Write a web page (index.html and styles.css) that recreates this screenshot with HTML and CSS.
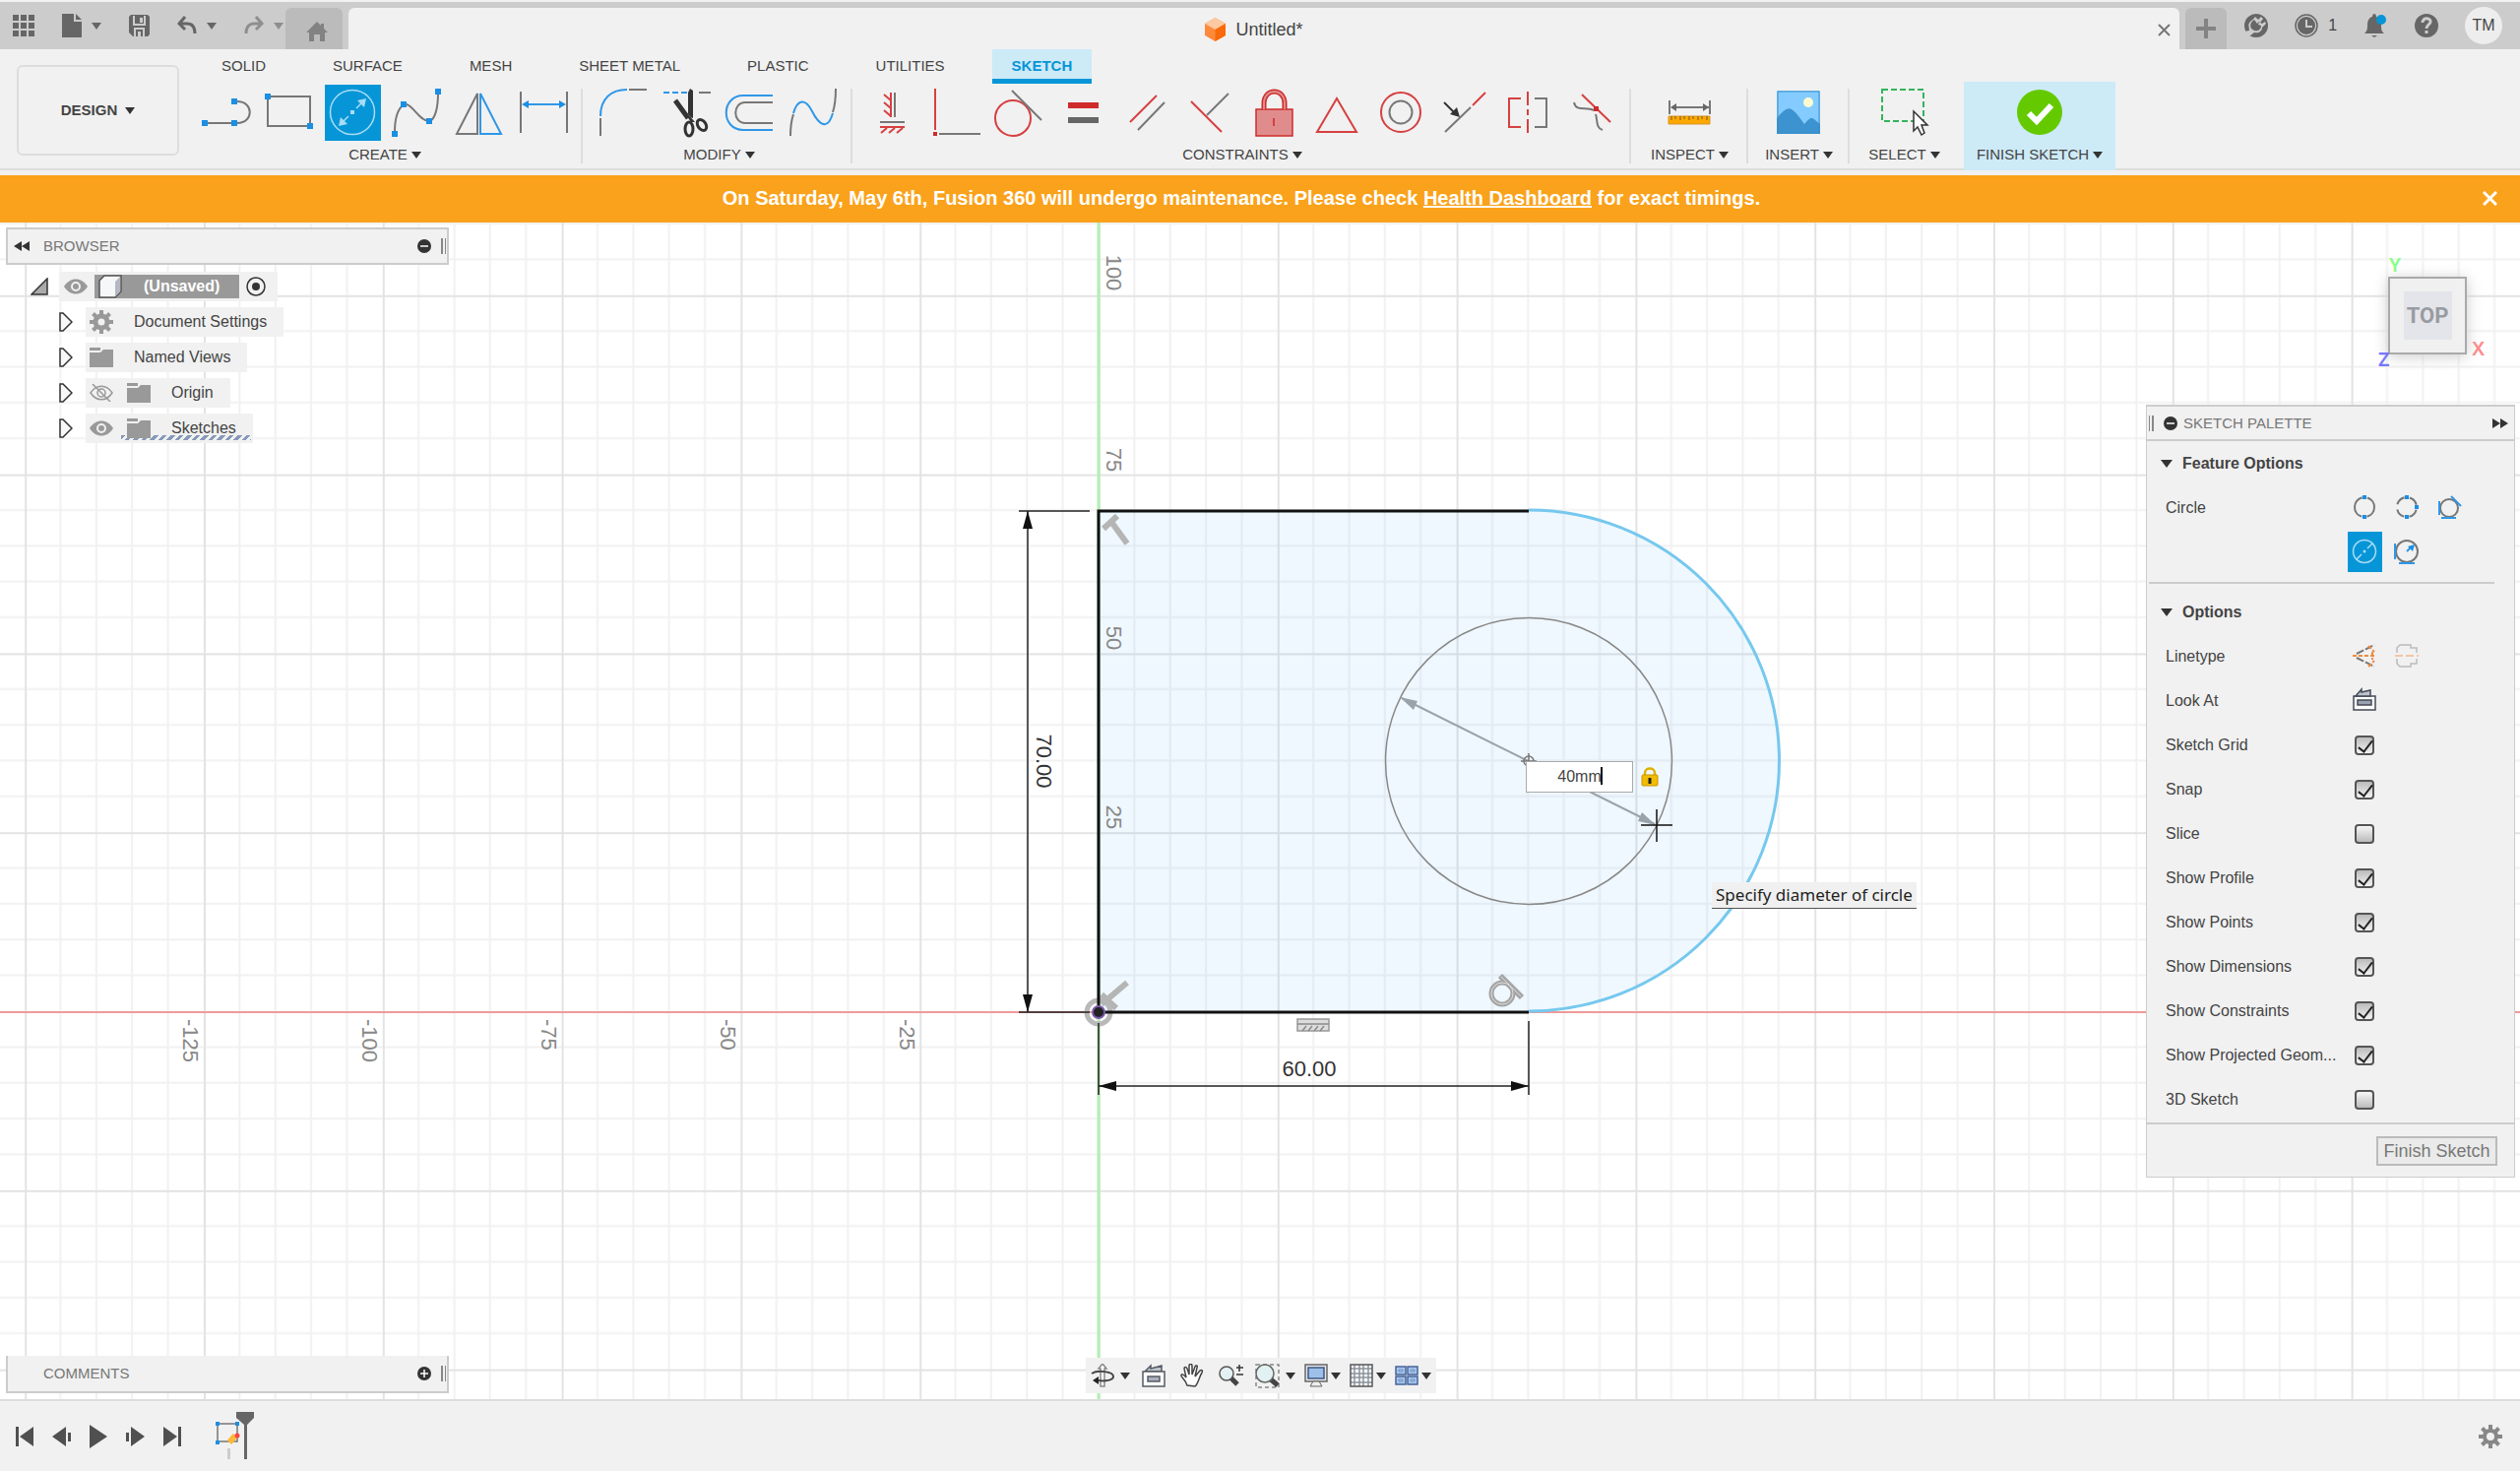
FILE: index.html
```html
<!DOCTYPE html>
<html lang="en">
<head>
<meta charset="utf-8">
<title>Untitled*</title>
<link rel="stylesheet" href="styles.css">
</head>
<body>
<header class="titlebar">
  <div class="quick">
    <button class="qbtn" aria-label="Data panel"><svg width="22" height="22" viewBox="0 0 22 22" fill="#666"><path d="M0 0h6v6H0zM8 0h6v6H8zM16 0h6v6h-6zM0 8h6v6H0zM8 8h6v6H8zM16 8h6v6h-6zM0 16h6v6H0zM8 16h6v6H8zM16 16h6v6h-6z"/></svg></button>
    <button class="qbtn" aria-label="File"><svg width="20" height="24" viewBox="0 0 20 24" fill="#666"><path d="M0 0h12v8h8v16H0zM14 0l6 6h-6z"/></svg><i class="caret"></i></button>
    <button class="qbtn" aria-label="Save"><svg width="21" height="22" viewBox="0 0 21 22"><path d="M2 0h17l2 2v18l-2 2H4l-4-4V2z" fill="#666"/><path d="M5 1v9h11V1M6 22v-8h9v8" fill="none" stroke="#ccc" stroke-width="2"/><path d="M11 3h3v5h-3zM9 17h3v5H9z" fill="#ccc"/></svg></button>
    <button class="qbtn" aria-label="Undo"><svg width="20" height="20" viewBox="0 0 20 20" fill="none" stroke="#666" stroke-width="3"><path d="M8 1L2 8l6 6M2 8h8c5 0 8 3 8 10"/></svg><i class="caret"></i></button>
    <button class="qbtn faded" aria-label="Redo"><svg width="20" height="20" viewBox="0 0 20 20" fill="none" stroke="#666" stroke-width="3"><path d="M12 1l6 7-6 6M18 8h-8c-6 0-8 4-8 10"/></svg><i class="caret"></i></button>
  </div>
  <button class="hometab" aria-label="Home"><svg width="24" height="20" viewBox="0 0 24 20" fill="#828282"><path d="M12 0l4 4V2h3v5l4 4h-3v9h-5v-7H9v7H4v-9H1z"/></svg></button>
  <div class="doctab">
    <svg width="21" height="24" viewBox="0 0 21 24"><path d="M10.500 0L21 6v12l-10.500 6L0 18V6z" fill="#ff8a3c"/><path d="M10.500 0L21 6l-10.500 6L0 6z" fill="#fdc9a0"/><path d="M21 6v12l-10.500 6V12z" fill="#f96a0b"/></svg>
    <span>Untitled*</span>
    <button class="close" aria-label="Close document"><svg width="13" height="13" viewBox="0 0 13 13" stroke="#777" stroke-width="2"><path d="M1 1l11 11M12 1L1 12"/></svg></button>
  </div>
  <button class="plustab" aria-label="New tab"><svg width="20" height="20" viewBox="0 0 20 20" stroke="#838383" stroke-width="4"><path d="M10 0v20M0 10h20"/></svg></button>
  <div class="status">
    <button class="qbtn" aria-label="Extensions"><svg width="24" height="24" viewBox="0 0 24 24"><circle cx="12" cy="12" r="12" fill="#666"/><path d="M0 18l5-1c0-3-2-6 1-9 2-2 4-3 5-5l3 3 3-3 2 2-3 4 2 1 3-2 1 2-4 4c0 4-4 6-8 5l-5 4z" fill="#ccc"/><path d="M4 21l6-4-3-2c-2-4 0-7 3-9l3 4 3-3-2 4 3 1c0 4-3 6-7 5z" fill="#666"/></svg></button>
    <button class="qbtn" aria-label="Jobs"><svg width="24" height="24" viewBox="0 0 24 24" fill="none"><circle cx="12" cy="12" r="11" stroke="#666" stroke-width="1.500"/><circle cx="12" cy="12" r="9" fill="#666"/><path d="M12 6v7h6" stroke="#ccc" stroke-width="2"/></svg><span>1</span></button>
    <button class="qbtn" aria-label="Notifications"><svg width="24" height="24" viewBox="0 0 24 24"><path d="M1 20c3-3 3-5 3-9 0-5 3-8 5-8 0-4 4-4 4 0 3 1 5 4 5 8 0 5 0 6 3 9zM8 22h6l-3 2z" fill="#666"/><circle cx="18" cy="6" r="5" fill="#0696d7"/></svg></button>
    <button class="qbtn" aria-label="Help"><svg width="24" height="24" viewBox="0 0 24 24"><circle cx="12" cy="12" r="12" fill="#666"/><path d="M8 9c0-6 9-5 8-.5C15.500 11 12 11 12 15M12 17v3" fill="none" stroke="#ccc" stroke-width="3"/></svg></button>
    <button class="avatar">TM</button>
  </div>
</header>

<section class="toolbar">
  <button class="design">DESIGN <i class="caret"></i></button>
  <div class="ribbon">
    <nav class="tabs">
      <a href="#">SOLID</a><a href="#">SURFACE</a><a href="#">MESH</a><a href="#">SHEET METAL</a><a href="#">PLASTIC</a><a href="#">UTILITIES</a><a href="#" class="on">SKETCH</a>
    </nav>
    <div class="groups">
      <div class="group create">
        <div class="tools">
          <button aria-label="Line"><svg viewBox="0 0 57 57"><path class="g" d="M8 39h30M41 39c17 0 17-22 0-22"/><path class="bf" d="M5 36h6v6H5zM35 36h6v6h-6zM35 14h6v6h-6z"/></svg></button>
          <button aria-label="Rectangle"><svg viewBox="0 0 57 57"><path class="g" d="M7 12h43v30H7z"/><path class="bf" d="M4 9h6v6H4zM47 39h6v6h-6z"/></svg></button>
          <button class="active" aria-label="Circle"><svg viewBox="0 0 57 57"><g stroke="#a9dcf5" fill="none" stroke-width="1.500"><circle cx="28" cy="28" r="22.500"/><path d="M32 24l6-6M24 32l-6 6"/></g><path d="M42 14l-2 9-7-7zM14 42l9-2-7-7zM26 26h4v4h-4z" fill="#a9dcf5"/></svg></button>
          <button aria-label="Spline"><svg viewBox="0 0 57 57"><path class="g" d="M6 48c0-16 4-24 9-28 9-2 15 17 26 17 6-1 9-14 9-28"/><path class="bf" d="M3 47h6v6H3zM12 17h6v6h-6zM38 34h6v6h-6zM47 4h6v6h-6z"/></svg></button>
          <button aria-label="Mirror"><svg viewBox="0 0 57 57"><path class="g" d="M25 9v41H4z"/><path class="b" d="M28 9v41h21z"/></svg></button>
          <button aria-label="Dimension"><svg viewBox="0 0 57 57"><path class="g" d="M4 7v42M51 7v42"/><path class="b" d="M8 20h40"/><path class="bf" d="M5 20l7-4v8zM50 20l-7-4v8z"/></svg></button>
        </div>
        <button class="glabel">CREATE <i class="caret"></i></button>
      </div>
      <div class="group modify">
        <div class="tools">
          <button aria-label="Fillet"><svg viewBox="0 0 57 57"><path class="g" d="M5 52V34M34 5h18"/><path class="b" d="M5 32C5 14 16 5 32 5"/></svg></button>
          <button aria-label="Trim"><svg viewBox="0 0 57 57"><path class="b" d="M4 8h24" stroke-dasharray="6 3"/><path class="g" d="M40 8h12"/><path d="M15 14l17 24h4zM31 4l3 2v28l-5-2V8z" fill="#333"/><path d="M29 34L16 16" stroke="#333" stroke-width="5"/><g fill="none" stroke="#333" stroke-width="3"><ellipse cx="30" cy="45" rx="4" ry="7"/><ellipse cx="43" cy="41" rx="4" ry="6" transform="rotate(-35 43 41)"/></g></svg></button>
          <button aria-label="Offset"><svg viewBox="0 0 57 57"><path class="b" stroke-width="2.500" d="M51 11H21c-23 0-23 35 0 35h30"/><path class="g" stroke-width="2" d="M51 18H23c-13 0-13 21 0 21h28"/></svg></button>
          <button aria-label="Edit spline"><svg viewBox="0 0 57 57"><path class="g" d="M4 52c0-10 1-16 3-22M47 28c2-6 3-14 3-24"/><path class="b" d="M7 29c4-14 12-16 19-2s16 20 21 2"/></svg></button>
        </div>
        <button class="glabel">MODIFY <i class="caret"></i></button>
      </div>
      <div class="group constraints">
        <div class="tools">
          <button aria-label="Horizontal/Vertical"><svg viewBox="-28 -28 57 57"><path class="g" d="M3-20V5M-12 10h25"/><path class="r" d="M-1-20V5M-1-12l-7-6M-1-4l-7-6M-1 4l-7-6M-12 15h25M-5 16l-6 5M3 16l-6 5M11 16l-6 5"/></svg></button>
          <button aria-label="Coincident"><svg viewBox="-28 -28 57 57"><path class="r" d="M-21-24v42"/><path class="g" d="M-17 22h42"/><path class="rf" d="M-23 20h4v4h-4z"/></svg></button>
          <button aria-label="Tangent"><svg viewBox="-28 -28 57 57"><circle class="r" cx="-6" cy="6" r="18"/><path class="g" d="M-7-22L23 8"/></svg></button>
          <button aria-label="Equal"><svg viewBox="-28 -28 57 57"><path class="rf" d="M-15-10h31v6h-31z"/><path d="M-15 5h31v6h-31z" fill="#666"/></svg></button>
          <button aria-label="Parallel"><svg viewBox="-28 -28 57 57"><path class="r" d="M-17 10l27-27"/><path class="g" d="M-9 18l27-28"/></svg></button>
          <button aria-label="Perpendicular"><svg viewBox="-28 -28 57 57"><path class="r" d="M-19-11l31 31"/><path class="g" d="M-3 3l22-22"/></svg></button>
          <button aria-label="Fix"><svg viewBox="-28 -28 57 57"><path d="M-18-3h37v27h-37z" fill="#e08c8c" stroke="#cf2b2b" stroke-width="1.500"/><path d="M-10-3v-6C-10-25 11-25 11-9v6" fill="none" stroke="#cf2b2b" stroke-width="5"/><path d="M-10-3v-6C-10-25 11-25 11-9v6" fill="none" stroke="#e08c8c" stroke-width="2"/><path class="r" d="M0 6v8"/></svg></button>
          <button aria-label="Polygon"><svg viewBox="-28 -28 57 57"><path class="r" d="M0-14l20 34h-40z"/></svg></button>
          <button aria-label="Concentric"><svg viewBox="-28 -28 57 57"><circle class="r" r="20"/><circle class="g" r="11.500"/></svg></button>
          <button aria-label="Midpoint"><svg viewBox="-28 -28 57 57"><path class="g" d="M-20 20L6-5"/><path class="r" d="M8-7l13-13"/><path d="M-21-10l10 10" stroke="#333" stroke-width="2"/><path d="M-5 5l-10-3 7-7z" fill="#333"/></svg></button>
          <button aria-label="Symmetry"><svg viewBox="-28 -28 57 57"><path class="r" d="M-7-14h-12v29h12M0-21v14M0-3v6M0 7v14"/><path class="g" d="M7-14h12v29H7"/></svg></button>
          <button aria-label="Curvature"><svg viewBox="-28 -28 57 57"><path class="g" d="M-18-10C-16 0-6-6 2-2M4 2c2 6 0 14 7 16"/><path class="r" d="M-10-18l29 28"/><path class="rf" d="M2-6h5v5H2z"/></svg></button>
        </div>
        <button class="glabel">CONSTRAINTS <i class="caret"></i></button>
      </div>
      <div class="group inspect">
        <div class="tools"><button aria-label="Measure"><svg viewBox="-28 -28 57 57"><path class="g" d="M-20-12V2M21-12V2M-18-5h38"/><path d="M-19-5l6-4v8zM20-5l-6-4v8z" fill="#666"/><path d="M-21 4h42v8h-42z" fill="#ffa800" stroke="#d99427"/><path d="M-18 4v4M-14 4v3M-9 4v4M-5 4v3M0 4v4M4 4v3M9 4v4M13 4v3M18 4v4" stroke="#7a5a10"/></svg></button></div>
        <button class="glabel">INSPECT <i class="caret"></i></button>
      </div>
      <div class="group insert">
        <div class="tools"><button aria-label="Insert image"><svg viewBox="-28 -28 57 57"><path d="M-22-22h44v44h-44z" fill="#84ccff"/><path d="M-22 6C-10-8-8-8 6 12c8-10 8-6 16 0v4H-22z" fill="#3c93cf"/><path d="M-22 14h44v8h-44z" fill="#3c93cf"/><circle cx="10" cy="-10" r="5" fill="#fffbd0"/><path d="M-21-21h42v42h-42z" fill="none" stroke="#3c8fc8"/></svg></button></div>
        <button class="glabel">INSERT <i class="caret"></i></button>
      </div>
      <div class="group select">
        <div class="tools"><button aria-label="Select"><svg viewBox="-28 -28 57 57"><path d="M-22-23h42v32h-42z" fill="none" stroke="#34b45c" stroke-width="2" stroke-dasharray="6 3"/><path d="M10-1v20l4-4 4 8 3-2-3-8h6z" fill="#fff" stroke="#333" stroke-width="1.500"/></svg></button></div>
        <button class="glabel">SELECT <i class="caret"></i></button>
      </div>
      <div class="group finish">
        <div class="tools"><button aria-label="Finish"><svg viewBox="-28 -28 57 57"><circle r="23" fill="#65c900"/><path d="M-11 1l8 8L12-7" fill="none" stroke="#fff" stroke-width="6"/></svg></button></div>
        <button class="glabel">FINISH SKETCH <i class="caret"></i></button>
      </div>
    </div>
  </div>
</section>

<section class="banner">
  <p>On Saturday, May 6th, Fusion 360 will undergo maintenance. Please check <a href="#">Health Dashboard</a> for exact timings.</p>
  <button aria-label="Dismiss"><svg width="15" height="15" viewBox="0 0 15 15" stroke="#fff" stroke-width="3"><path d="M1 1l13 13M14 1L1 14"/></svg></button>
</section>

<main class="canvas">
  <svg class="sketch" width="100%" height="100%">
    <defs>
      <pattern id="grid" patternUnits="userSpaceOnUse" x="1116" y="801" width="181.800" height="181.800">
        <path d="M36.360 0v182M72.720 0v182M109.080 0v182M145.440 0v182M0 36.360h182M0 72.720h182M0 109.080h182M0 145.440h182" stroke="#f1f1f1" stroke-width="2"/>
        <path d="M1 0v182M0 1h182" stroke="#e3e3e3" stroke-width="2"/>
      </pattern>
    </defs>
    <rect width="100%" height="100%" fill="url(#grid)"/>
    <path d="M0 802h2560" stroke="#ee9a9a" stroke-width="2"/>
    <path d="M1116 0v1200" stroke="#b4efb4" stroke-width="3"/>
    <g transform="translate(1116 801)">
      <path d="M0 0V-509H437A254.500 254.500 0 0 1 437 0z" fill="#36a6f0" fill-opacity=".08"/>
      <path d="M437-509A254.500 254.500 0 0 1 437 0" fill="none" stroke="#76c8ee" stroke-width="3"/>
      <g class="axis">
        <text transform="translate(8 -750) rotate(90)" text-anchor="middle">100</text>
        <text transform="translate(8 -560) rotate(90)" text-anchor="middle">75</text>
        <text transform="translate(8 -379) rotate(90)" text-anchor="middle">50</text>
        <text transform="translate(8 -197) rotate(90)" text-anchor="middle">25</text>
        <text transform="translate(-930 8) rotate(90)">-125</text>
        <text transform="translate(-748 8) rotate(90)">-100</text>
        <text transform="translate(-566 8) rotate(90)">-75</text>
        <text transform="translate(-384 8) rotate(90)">-50</text>
        <text transform="translate(-202 8) rotate(90)">-25</text>
      </g>
      <g stroke="#8a8a8a" fill="none">
        <circle cx="0" cy="1" r="12" stroke-width="5" stroke="#b9b9b9"/>
        <path d="M3-7l26-22M3-17l15 14" stroke-width="6" stroke="#b5b5b5"/>
        <path d="M5-490l14-13M13-497l16 22" stroke-width="6" stroke="#b5b5b5"/>
        <g stroke="#a5a5a5"><circle cx="410" cy="-18" r="11" stroke-width="5"/><path d="M408-36l22 22" stroke-width="6"/></g>
        <g stroke="#ddd" stroke-width="1"><circle cx="410" cy="-18" r="11"/><path d="M409-35l20 20"/></g>
        <rect x="202" y="8" width="32" height="12" fill="#ddd" stroke="#999" stroke-width="1.500"/><path d="M202 13h32M207 20l4-5M213 20l4-5M219 20l4-5M225 20l4-5" stroke-width="1.500"/>
      </g>
      <path d="M0 1V-508H437M0 1H437" fill="none" stroke="#111" stroke-width="3"/>
      <circle cx="0" cy="1" r="6" fill="#222" stroke="#7858a8" stroke-width="2"/>
      <g stroke="#222" stroke-width="1.500">
        <path d="M-81-508H-9M-81 1H-9M-72-508V1M0 12V85M437 10V85M0 76H437"/>
      </g>
      <path d="M-72-508l5 18h-10zM-72 1l5-18h-10zM0 76l18-5v10zM437 76l-18-5v10z" fill="#111"/>
      <g class="dims">
        <text x="214" y="66" text-anchor="middle">60.00</text>
        <text transform="translate(-63 -254) rotate(90)" text-anchor="middle">70.00</text>
      </g>
      <circle cx="437" cy="-254" r="145.500" fill="none" stroke="#888" stroke-width="1.500"/>
      <g stroke="#9aa3aa" stroke-width="2"><path d="M308-318L565-190"/><path d="M306-319l18 4-4 9zM566-189l-18-4 4-9z" fill="#9aa3aa" stroke="none"/></g>
      <path d="M437-262v16M429-254h16" stroke="#777" stroke-width="1.500"/><circle cx="437" cy="-254" r="5" fill="none" stroke="#777" stroke-width="1.500"/>
      <path d="M567-205v33M551-189h32" stroke="#111" stroke-width="1.500"/>
    </g>
  </svg>

  <div class="dimbox">
    <label class="entry"><input type="text" value="40mm" aria-label="Diameter"><i></i></label>
    <svg width="18" height="20" viewBox="0 0 18 20"><path d="M4 9V6c0-6 10-6 10 0v3" fill="none" stroke="#e0b000" stroke-width="2.500"/><rect x="1" y="8" width="16" height="11" rx="1" fill="#f2bc00" stroke="#c99700"/><path d="M9 11v6" stroke="#222" stroke-width="3"/></svg>
  </div>
  <div class="tip">Specify diameter of circle</div>

  <aside class="browser">
    <div class="phead"><svg width="16" height="10" viewBox="0 0 16 10" fill="#333"><path d="M8 0v10L0 5zM16 0v10L8 5z"/></svg><h2>BROWSER</h2><button class="dot" aria-label="Collapse"><svg width="14" height="14" viewBox="0 0 14 14"><circle cx="7" cy="7" r="7" fill="#333"/><path d="M3 7h8" stroke="#fff" stroke-width="1.500"/></svg></button><i class="grip"></i></div>
    <ul class="tree">
      <li class="root"><svg width="18" height="18" viewBox="0 0 18 18"><path d="M17 1v16H1z" fill="#aaa" stroke="#333" stroke-width="1.500"/></svg>
        <div class="chip"><svg class="eye" width="24" height="16" viewBox="0 0 24 16"><path d="M0 8C6-2 18-2 24 8 18 18 6 18 0 8z" fill="#999"/><circle cx="12" cy="8" r="4" fill="#999" stroke="#f0f0f0" stroke-width="2"/></svg>
          <span class="rootname"><svg width="24" height="24" viewBox="0 0 24 24"><path d="M1 6l5-5h17v16l-6 6H1z" fill="#f6f7f9" stroke="#555" stroke-width="1.500"/><path d="M17 7v15l5-5V2z" fill="#b4b8c2"/></svg><b>(Unsaved)</b></span>
          <svg width="20" height="20" viewBox="0 0 20 20"><circle cx="10" cy="10" r="9" fill="none" stroke="#333" stroke-width="1.500"/><circle cx="10" cy="10" r="4" fill="#333"/></svg></div></li>
      <li><svg class="tw" width="14" height="20" viewBox="0 0 14 20"><path d="M1 1h3l9 9-9 9H1z" fill="#f8f8f8" stroke="#333" stroke-width="1.500"/></svg><div class="chip"><svg width="24" height="24" viewBox="-12 -12 24 24"><circle r="6" fill="none" stroke="#999" stroke-width="5"/><path d="M0-12V-7M0 12V7M-12 0H-7M12 0H7M-8.500-8.500L-5-5M8.500 8.500L5 5M-8.500 8.500L-5 5M8.500-8.500L5-5" stroke="#999" stroke-width="4"/></svg><span>Document Settings</span></div></li>
      <li><svg class="tw" width="14" height="20" viewBox="0 0 14 20"><path d="M1 1h3l9 9-9 9H1z" fill="#f8f8f8" stroke="#333" stroke-width="1.500"/></svg><div class="chip"><svg width="24" height="20" viewBox="0 0 24 20" fill="#999"><path d="M0 0h11v3H0zM0 5h11l3-3h10v18H0z"/></svg><span>Named Views</span></div></li>
      <li><svg class="tw" width="14" height="20" viewBox="0 0 14 20"><path d="M1 1h3l9 9-9 9H1z" fill="#f8f8f8" stroke="#333" stroke-width="1.500"/></svg><div class="chip"><svg class="eye" width="24" height="18" viewBox="0 0 24 18" fill="none" stroke="#999" stroke-width="1.500"><path d="M1 9C7 0 17 0 23 9 17 18 7 18 1 9z"/><circle cx="12" cy="9" r="4"/><path d="M3 0l18 18"/></svg><svg width="24" height="20" viewBox="0 0 24 20" fill="#999"><path d="M0 0h11v3H0zM0 5h11l3-3h10v18H0z"/></svg><span>Origin</span></div></li>
      <li><svg class="tw" width="14" height="20" viewBox="0 0 14 20"><path d="M1 1h3l9 9-9 9H1z" fill="#f8f8f8" stroke="#333" stroke-width="1.500"/></svg><div class="chip hatch"><svg class="eye" width="24" height="16" viewBox="0 0 24 16"><path d="M0 8C6-2 18-2 24 8 18 18 6 18 0 8z" fill="#999"/><circle cx="12" cy="8" r="4" fill="#999" stroke="#f0f0f0" stroke-width="2"/></svg><svg width="24" height="20" viewBox="0 0 24 20" fill="#999"><path d="M0 0h11v3H0zM0 5h11l3-3h10v18H0z"/></svg><span>Sketches</span></div></li>
    </ul>
  </aside>

  <aside class="comments"><div class="phead"><svg width="16" height="10"></svg><h2>COMMENTS</h2><button class="dot" aria-label="Expand"><svg width="14" height="14" viewBox="0 0 14 14"><circle cx="7" cy="7" r="7" fill="#333"/><path d="M3 7h8M7 3v8" stroke="#fff" stroke-width="1.500"/></svg></button><i class="grip"></i></div></aside>

  <div class="cube"><b class="y">Y</b><b class="x">X</b><b class="z">Z</b><button>TOP</button></div>

  <aside class="palette">
    <div class="phead"><i class="grip"></i><button class="dot" aria-label="Collapse palette"><svg width="14" height="14" viewBox="0 0 14 14"><circle cx="7" cy="7" r="7" fill="#333"/><path d="M3 7h8" stroke="#fff" stroke-width="1.500"/></svg></button><h2>SKETCH PALETTE</h2><svg width="16" height="10" viewBox="0 0 16 10" fill="#333"><path d="M0 0l8 5-8 5zM8 0l8 5-8 5z"/></svg></div>
    <section>
      <h3><i class="caret"></i>Feature Options</h3>
      <div class="row"><span>Circle</span><div class="opts">
        <button aria-label="Center"><svg viewBox="-17 -20 35 41"><circle class="g" r="10" stroke-dasharray="26 5.400" stroke-dashoffset="-18.400"/><path class="bf" d="M-2-12h4v4h-4zM-2 8h4v4h-4z"/></svg></button>
        <button aria-label="Three point"><svg viewBox="-17 -20 35 41"><circle class="g" r="10" stroke-dasharray="10.300 5.400" stroke-dashoffset="-2.700"/><path class="bf" d="M-2-12h4v4h-4zM-2 8h4v4h-4zM8-2h4v4H8z"/></svg></button>
        <button aria-label="Three tangent"><svg viewBox="-17 -20 35 41"><circle class="g" cx="0" cy="1" r="9"/><path class="b" d="M-10-6v14M-8 11H7M2-11l10 10"/></svg></button></div></div>
      <div class="row"><span></span><div class="opts">
        <button class="active" aria-label="Center diameter"><svg viewBox="-17 -20 35 41"><g fill="none" stroke="#a9dcf5" stroke-width="1.500"><circle r="11.500"/><path d="M3-3l5-5M-3 3l-5 5"/></g><circle r="1.500" fill="#a9dcf5"/></svg></button>
        <button aria-label="Two tangent"><svg viewBox="-17 -20 35 41"><circle class="g" r="11"/><path class="b" d="M-12-8V8M-8 12H8M0 0l5-5"/><path class="bf" d="M8-7L6 0 1-5z"/></svg></button></div></div>
    </section>
    <hr>
    <section>
      <h3><i class="caret"></i>Options</h3>
      <div class="row"><span>Linetype</span><div class="opts">
        <button aria-label="Construction"><svg viewBox="-17 -20 35 41" fill="none"><path class="g" stroke-dasharray="8 2" d="M-8-2L10-11M-8 2L10 11"/><path d="M-12 0h24M4-10l6 6M8-4V4M4 11l6-6" stroke="#f08a3c" stroke-width="2" stroke-dasharray="4 2"/></svg></button>
        <button aria-label="Centerline"><svg viewBox="-17 -20 35 41" fill="none"><path d="M-10-3v-5l3-3H4v3h6v5M-10 3v5l3 3H4V8h6V3" stroke="#bbb" stroke-width="1.500"/><path d="M-12 0h24" stroke="#f4b78f" stroke-width="1.500" stroke-dasharray="8 3"/></svg></button></div></div>
      <div class="row"><span>Look At</span><div class="opts"><button aria-label="Look at"><svg viewBox="-17 -20 35 41"><g fill="#fff" stroke="#444b55" stroke-width="1.500"><path d="M-11-4h22v14h-22z"/><path d="M-9-4l6-7v3l9-2v6z" fill="#bcc3cc"/><path d="M-7 0H7v5H-7z" fill="#9aa3b2"/></g></svg></button></div></div>
      <label class="row"><span>Sketch Grid</span><input type="checkbox" checked></label>
      <label class="row"><span>Snap</span><input type="checkbox" checked></label>
      <label class="row"><span>Slice</span><input type="checkbox"></label>
      <label class="row"><span>Show Profile</span><input type="checkbox" checked></label>
      <label class="row"><span>Show Points</span><input type="checkbox" checked></label>
      <label class="row"><span>Show Dimensions</span><input type="checkbox" checked></label>
      <label class="row"><span>Show Constraints</span><input type="checkbox" checked></label>
      <label class="row"><span>Show Projected Geom...</span><input type="checkbox" checked></label>
      <label class="row"><span>3D Sketch</span><input type="checkbox"></label>
    </section>
    <footer><button>Finish Sketch</button></footer>
  </aside>

  <div class="navbar">
    <button class="wide" aria-label="Orbit"><svg width="24" height="24" viewBox="0 0 24 24" fill="none" stroke="#444" stroke-width="1.500"><path d="M10 23V5H8l4-5 4 5h-2v18z" fill="#fff" stroke="#888"/><path d="M1 10c6-4 22-2 22 3 0 4-8 5-16 4" stroke-width="2"/><path d="M8 13v8l-6-4z" fill="#222" stroke="none"/></svg><i class="caret"></i></button>
    <button class="plain" aria-label="Look at"><svg width="24" height="24" viewBox="0 0 24 24" fill="#fff" stroke="#555b63" stroke-width="1.500"><path d="M3 8l6-6v3l11-3v6z" fill="#bcc3cc"/><path d="M1 8h22v15H1z"/><path d="M6 13h12v5H6z" fill="#aab0bd"/></svg></button>
    <button class="plain" aria-label="Pan"><svg width="24" height="24" viewBox="0 0 24 24"><path d="M7 22C5 16 1 14 1 12s3-1 5 2L4 5c0-2 2-2 3 0l2 6V2c0-2 3-2 3 0v9l3-8c1-2 3-1 2 1l-2 9 5-6c2-1 3 0 2 2-3 5-4 12-7 14z" fill="#fff" stroke="#444" stroke-width="1.500"/></svg></button>
    <button class="plain" aria-label="Zoom"><svg width="26" height="24" viewBox="0 0 26 24"><path d="M12 14l7 7" stroke="#444" stroke-width="5"/><circle cx="8" cy="10" r="7" fill="#e4f1f4" stroke="#555" stroke-width="1.500"/><path d="M21 1v7M18 4h7M18 11h7" stroke="#333" stroke-width="1.500"/></svg></button>
    <button class="wide" aria-label="Fit"><svg width="25" height="25" viewBox="0 0 25 25"><path d="M1 1h23v23H1z" fill="none" stroke="#888" stroke-width="1.500" stroke-dasharray="4 3"/><path d="M16 16l7 6" stroke="#444" stroke-width="5"/><circle cx="10" cy="10" r="9" fill="#e2f2f2" stroke="#666" stroke-width="1.500"/></svg><i class="caret"></i></button>
    <button aria-label="Display"><svg width="24" height="24" viewBox="0 0 24 24"><path d="M1 1h22v17H1z" fill="#e8e8e8" stroke="#666" stroke-width="1.500"/><path d="M4 4h16v11H4z" fill="#9dc0e8" stroke="#3d5585" stroke-width="1.500"/><path d="M9 18h6l3 5H6z" fill="#eee" stroke="#666"/></svg><i class="caret"></i></button>
    <button aria-label="Grid"><svg width="24" height="24" viewBox="0 0 24 24" fill="none"><path d="M1 1h22v22H1z" fill="#fff"/><path d="M1 5h22M1 10h22M1 14h22M1 19h22M5 1v22M10 1v22M14 1v22M19 1v22" stroke="#8a929c" stroke-width="1.500"/><path d="M1 1h22v22H1z" stroke="#555" stroke-width="1.500"/></svg><i class="caret"></i></button>
    <button aria-label="Viewports"><svg width="24" height="20" viewBox="0 0 24 20" fill="#a8c6ea" stroke="#46639a" stroke-width="1.500"><path d="M1 1h10v8H1zM13 1h10v8H13zM1 11h10v8H1zM13 11h10v8H13z"/><path d="M4 4h4v2H4zM16 4h4v2h-4zM4 14h4v2H4zM16 14h4v2h-4z" stroke="#6f93c8" stroke-width="1"/></svg><i class="caret"></i></button>
  </div>
</main>

<footer class="timeline">
  <button aria-label="Start"><svg width="18" height="22" viewBox="0 0 18 22"><path d="M0 1h3v20H0zM18 1v20L4 11z"/></svg></button>
  <button aria-label="Step back"><svg width="19" height="20" viewBox="0 0 19 20"><path d="M14 0v20L0 10zM16 6h3v9h-3z"/></svg></button>
  <button aria-label="Play"><svg width="18" height="24" viewBox="0 0 18 24"><path d="M0 0l18 12L0 24z"/></svg></button>
  <button aria-label="Step forward"><svg width="19" height="20" viewBox="0 0 19 20"><path d="M5 0v20l14-10zM0 6h3v9H0z"/></svg></button>
  <button aria-label="End"><svg width="18" height="22" viewBox="0 0 18 22"><path d="M0 1v20l14-10zM15 1h3v20h-3z"/></svg></button>
  <button class="feature" aria-label="Sketch1"><svg width="42" height="50" viewBox="0 0 42 50"><path d="M3 12h20v18H3z" fill="none" stroke="#777" stroke-width="1.500"/><path d="M1 10h4v4H1zM21 10h4v4h-4zM1 29h4v4H1z" fill="#1a8fe3"/><path d="M15 31l6-7" stroke="#ffb938" stroke-width="6"/><circle cx="23" cy="24" r="2.500" fill="#f44"/><path d="M13 37h3v11h-3z" fill="#ccc"/><path d="M22 0h18v6l-7 7v35h-3V13l-8-7z" fill="#666"/></svg></button>
  <button class="gear" aria-label="Settings"><svg width="24" height="24" viewBox="-12 -12 24 24"><circle r="6" fill="none" stroke="#888" stroke-width="4"/><path d="M0-12V-7M0 12V7M-12 0H-7M12 0H7M-8.500-8.500L-5-5M8.500 8.500L5 5M-8.500 8.500L-5 5M8.500-8.500L5-5" stroke="#888" stroke-width="4"/></svg></button>
</footer>
</body>
</html>
```
FILE: styles.css
```css
* { box-sizing: border-box; }
body {
  margin: 0;
  min-height: 100vh;
  display: flex;
  flex-direction: column;
  background: #f1f1f1;
  color: #444;
  font: 16px/20px "Liberation Sans", Arial, sans-serif;
}
button {
  border: 0;
  padding: 0;
  margin: 0;
  background: none;
  color: inherit;
  font: inherit;
  display: flex;
  align-items: center;
  justify-content: center;
}
svg { display: block; flex: none; }
h2, h3, p, ul { margin: 0; padding: 0; }
.caret {
  width: 0;
  height: 0;
  border: 5px solid transparent;
  border-top: 7px solid #333;
  border-bottom: 0;
}
.g { fill: none; stroke: #777; stroke-width: 2; }
.b { fill: none; stroke: #2f97e8; stroke-width: 2; }
.r { fill: none; stroke: #d64040; stroke-width: 2; }
.bf { fill: #1a8fe3; }
.rf { fill: #cf2b2b; }
.active { background: #0696d7; }

/* Title bar */
.titlebar {
  height: 50px;
  border-top: 2px solid #f1f1f1;
  background: #ccc;
  display: flex;
  align-items: flex-end;
}
.quick {
  width: 290px;
  height: 48px;
  padding-left: 13px;
  display: flex;
  align-items: center;
  gap: 28px;
}
.qbtn { gap: 10px; }
.qbtn .caret { border-top-color: #666; }
.faded { opacity: .6; }
.hometab, .plustab {
  height: 42px;
  background: #bbb;
  border-radius: 6px 6px 0 0;
}
.hometab { width: 58px; padding: 6px 0 0 6px; }
.plustab { width: 42px; margin-left: 6px; }
.doctab {
  flex: 1;
  height: 42px;
  margin-left: 6px;
  padding: 2px 9px 0 12px;
  background: #f1f1f1;
  border-radius: 6px 6px 0 0;
  display: flex;
  align-items: center;
  gap: 10px;
  font-size: 18px;
}
.doctab > svg { margin-left: auto; }
.doctab .close { margin-left: auto; }
.status {
  width: 298px;
  height: 48px;
  padding: 0 18px 0 18px;
  display: flex;
  align-items: center;
  justify-content: space-between;
}
.avatar {
  width: 38px;
  height: 38px;
  border-radius: 50%;
  background: #ededed;
}

/* Ribbon */
.toolbar {
  display: flex;
  height: 128px;
  border-bottom: 5px solid #f1f1f1;
  box-shadow: inset 0 -2px #ddd;
  font-size: 15px;
}
.design {
  width: 165px;
  height: 92px;
  margin: 16px 8px 0 17px;
  gap: 8px;
  border: 2px solid #ddd;
  border-radius: 6px;
  font-weight: bold;
}
.ribbon { flex: 1; }
.tabs { display: flex; height: 33px; gap: 28px; padding-left: 15px; }
.tabs a {
  height: 35px;
  padding: 7px 20px 0;
  color: #444;
  text-decoration: none;
}
.tabs .on {
  background: #cdeaf7;
  border-bottom: 5px solid #0696d7;
  color: #0696d7;
  font-weight: bold;
}
.groups { display: flex; height: 90px; }
.group {
  display: flex;
  flex-direction: column;
  padding: 3px 0 0;
  background: linear-gradient(#ddd, #ddd) right 7px / 2px 76px no-repeat;
}
.tools { display: flex; justify-content: space-between; }
.tools button, .tools svg { width: 57px; height: 57px; }
.glabel { gap: 4px; height: 28px; }
.create { width: 402px; padding-left: 10px; padding-right: 10px; }
.modify { width: 274px; padding-left: 13px; padding-right: 10px; }
.constraints { width: 791px; padding-left: 12px; padding-right: 11px; }
.inspect, .insert, .select, .finish { align-items: center; }
.inspect { width: 119px; }
.insert { width: 103px; }
.select { width: 111px; margin-right: 5px; background: none; }
.finish { width: 154px; background: #cdeaf7; }

/* Notice */
.banner {
  height: 48px;
  padding: 0 23px 2px 0;
  display: flex;
  align-items: center;
  background: #faa21b;
  color: #fff;
  font-size: 20px;
  font-weight: bold;
}
.banner p { flex: 1; text-align: center; }
.banner a { color: #fff; }

/* Drawing area */
.canvas { position: relative; flex: 1; background: #fff; overflow: hidden; }
.sketch { position: absolute; inset: 0; }
.axis, .dims { font-size: 22px; fill: #888; }
.dims { fill: #333; }
.dimbox { position: absolute; left: 1550px; top: 547px; display: flex; align-items: center; gap: 8px; }
.entry { position: relative; }
.entry input {
  display: block;
  width: 109px;
  height: 32px;
  border: 1px solid #aaa;
  padding: 0;
  text-align: center;
  color: #444;
  font: 16px/20px "Liberation Sans", Arial, sans-serif;
}
.entry i { position: absolute; left: 76px; top: 6px; width: 2px; height: 18px; background: #111; }
.tip {
  position: absolute;
  left: 1739px;
  top: 670px;
  padding: 2px 4px;
  background: #f0f0f0;
  border-bottom: 1px solid #555;
  color: #222;
  font: 17px/22px "Noto Sans", sans-serif;
}

/* Panels */
.phead {
  height: 38px;
  display: flex;
  align-items: center;
  border: 2px solid #ccc;
  background: #f1f1f1;
  color: #777;
}
.phead h2 { font-size: 15px; line-height: 20px; font-weight: normal; flex: 1; }
.grip { width: 5px; height: 16px; border: solid #888; border-width: 0 1px 0 2px; }
.browser, .comments { position: absolute; left: 6px; width: 450px; }
.browser { top: 5px; }
.comments { bottom: 6px; }
.comments .phead { border-top: 0; }
.browser .phead, .comments .phead { padding: 0 1px 0 6px; }
.browser h2, .comments h2 { padding-left: 14px; }
.dot { margin-right: 10px; }
.tree { list-style: none; padding-top: 4px; }
.tree li { height: 36px; display: flex; align-items: center; padding-left: 54px; gap: 13px; }
.tree .root { padding-left: 25px; gap: 11px; }
.chip {
  height: 30px;
  padding: 0 17px 0 4px;
  display: flex;
  align-items: center;
  gap: 14px;
  background: #f1f1f1;
}
.chip span { padding-left: 7px; }
.root .chip { padding: 0 12px 0 5px; gap: 7px; }
.chip .rootname {
  width: 147px;
  height: 24px;
  padding: 0 0 0 4px;
  display: flex;
  align-items: center;
  gap: 22px;
  background: #999;
  color: #fff;
}
.hatch {
  background: repeating-linear-gradient(135deg, #8799b8 0 3px, transparent 3px 6px) 36px 22px / 132px 5px no-repeat, #f1f1f1;
}

/* Orientation cube */
.cube { position: absolute; right: 54px; top: 55px; width: 80px; height: 79px; }
.cube button {
  position: relative;
  width: 100%;
  height: 100%;
  border: 2px solid #aaa;
  background: linear-gradient(#e4e5ea, #e4e5ea) center / 49px 49px no-repeat, #f0f0f0;
  box-shadow: 0 2px 14px #ccc;
  color: #999ba2;
  font: bold 22px/24px "Liberation Sans Narrow", Roboto, sans-serif;
}
.cube b { position: absolute; font: 600 20px/20px "Noto Sans", sans-serif; }
.cube .y { left: 1px; top: -22px; color: #8f8; }
.cube .x { right: -18px; bottom: -4px; color: #f88; }
.cube .z { left: -10px; bottom: -15px; color: #77f; z-index: 1; }

/* Sketch palette */
.palette {
  position: absolute;
  right: 5px;
  top: 185px;
  width: 375px;
  background: #f1f1f1;
  border: 1px solid #ccc;
}
.palette .phead { height: 36px; border-width: 1px 0 2px; padding: 0 6px 0 2px; }
.palette .dot { margin: 0 6px 0 10px; }
.palette .grip { border-width: 0 2px 0 1px; }
.palette h3 {
  height: 45px;
  padding-left: 14px;
  display: flex;
  align-items: center;
  gap: 10px;
  font-size: 16px;
  line-height: 20px;
  font-weight: bold;
}
.palette h3 .caret { border-width: 8px 6px 0; }
.row { height: 45px; padding-left: 19px; display: flex; align-items: center; }
.row > span { width: 185px; white-space: nowrap; }
.opts { display: flex; gap: 8px; }
.opts button, .opts svg { width: 35px; height: 41px; }
.palette hr { margin: 8px 20px 6px 2px; border: 0; border-top: 2px solid #ccc; }
.row input {
  appearance: none;
  width: 20px;
  height: 20px;
  margin: 0 0 0 7px;
  border: 2px solid #555;
  border-radius: 4px;
  background: linear-gradient(#f6f6f6, #bbb);
}
.row input:checked { background: linear-gradient(#bbb, #f2f2f2); }
.row input:checked::after {
  content: "";
  display: block;
  width: 6px;
  height: 13px;
  margin: 0 0 0 5px;
  border: solid #222;
  border-width: 0 2px 2px 0;
  transform: rotate(38deg);
}
.palette footer {
  height: 55px;
  margin-top: 1px;
  padding: 12px 17px;
  border-top: 2px solid #ccc;
  display: flex;
  justify-content: flex-end;
}
.palette footer button {
  width: 123px;
  height: 30px;
  border: 2px solid #bbb;
  background: #eaeaea;
  color: #777;
  font-size: 18px;
}

/* View controls */
.navbar {
  position: absolute;
  left: 1103px;
  bottom: 6px;
  width: 356px;
  height: 36px;
  padding: 0 5px;
  display: flex;
  align-items: center;
  justify-content: space-between;
  background: #f1f1f1;
}
.navbar button { gap: 3px; }
.navbar .wide { gap: 6px; }
.navbar .plain { margin: 0 3px; }

/* Timeline */
.timeline {
  height: 73px;
  padding: 0 18px 0 16px;
  border-top: 2px solid #ddd;
  display: flex;
  align-items: center;
  gap: 19px;
  fill: #505050;
}
.timeline .feature { margin-left: 15px; }
.timeline .gear { margin-left: auto; }
```
